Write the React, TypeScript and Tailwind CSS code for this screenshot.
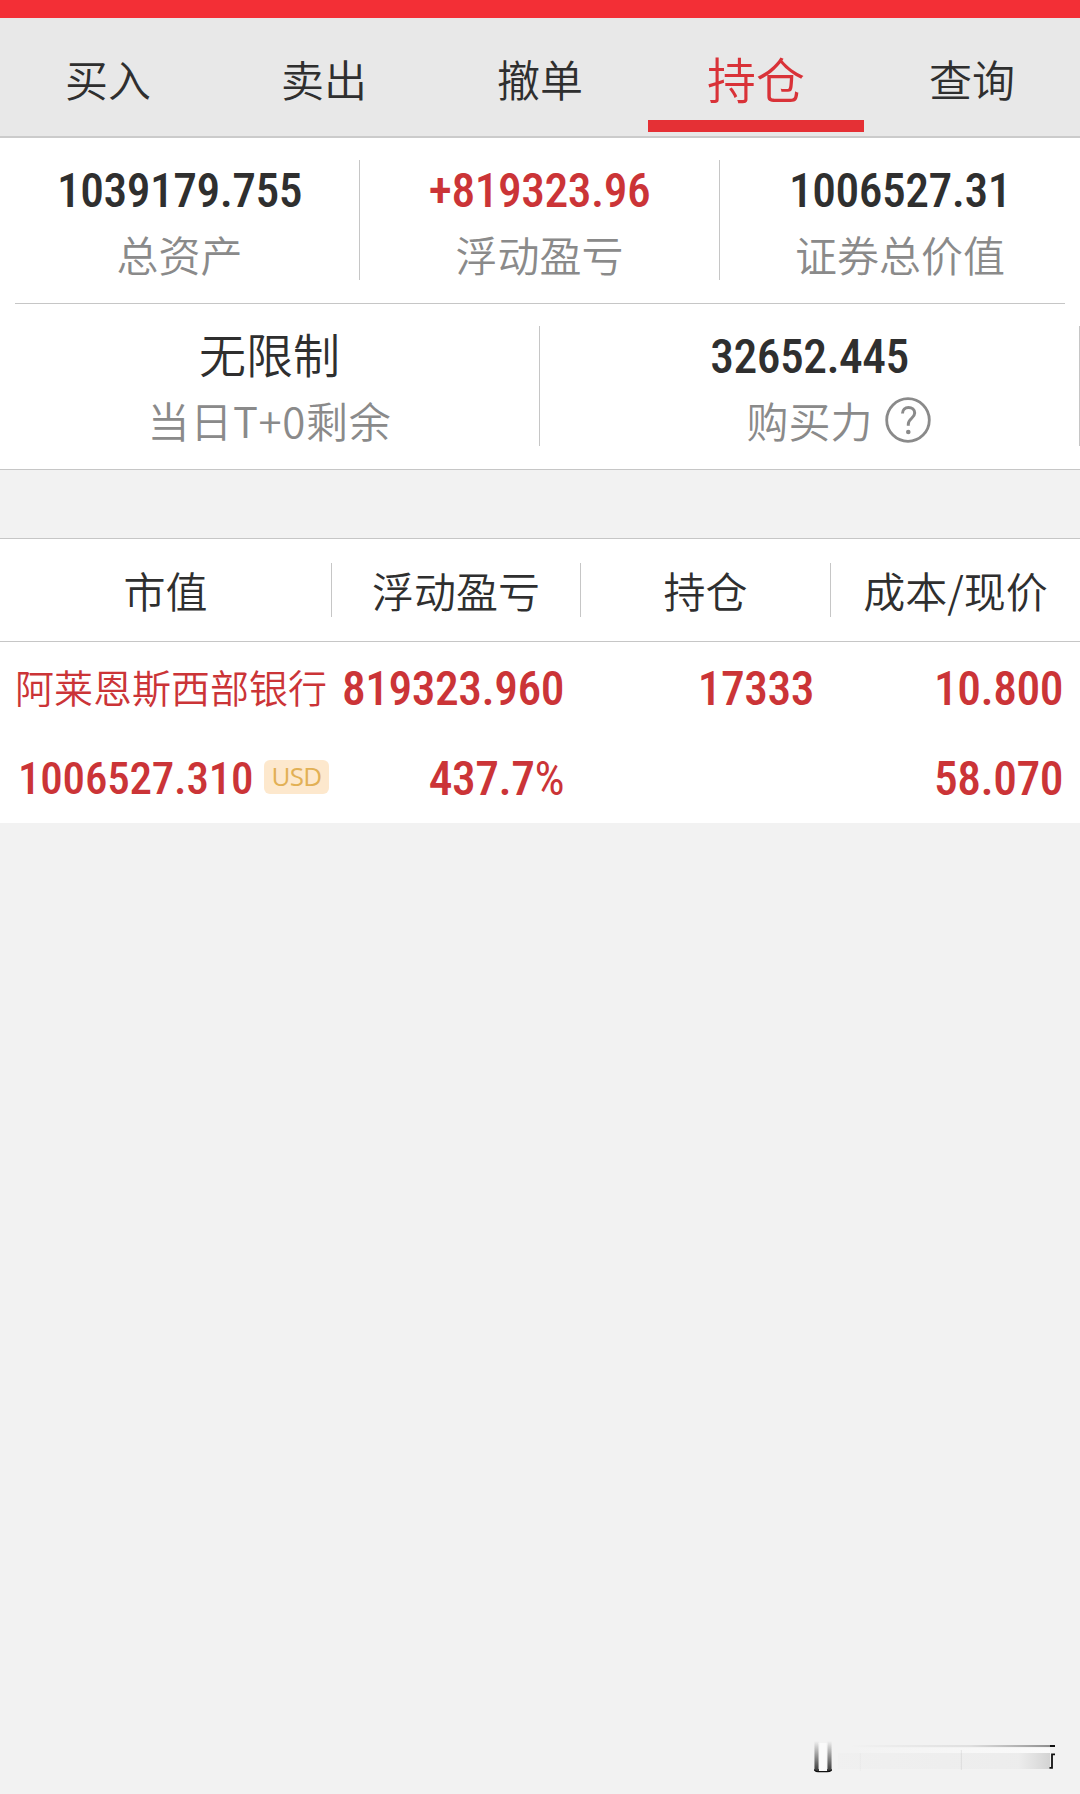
import React from 'react';
import clsx from 'clsx';

interface Stat {
  label: string;
  value: string;
  tone?: 'up';
  cjk?: boolean;
  help?: boolean;
}

const TABS = ['买入', '卖出', '撤单', '持仓', '查询'];
const ACTIVE_TAB = '持仓';

const SUMMARY: Stat[] = [
  { label: '总资产', value: '1039179.755' },
  { label: '浮动盈亏', value: '+819323.96', tone: 'up' },
  { label: '证券总价值', value: '1006527.31' },
];

const LIMITS: Stat[] = [
  { label: '当日T+0剩余', value: '无限制', cjk: true },
  { label: '购买力', value: '32652.445', help: true },
];

const COLUMNS = ['市值', '浮动盈亏', '持仓', '成本/现价'];

const HOLDING = {
  name: '阿莱恩斯西部银行',
  marketValue: '1006527.310',
  currency: 'USD',
  profit: '819323.960',
  profitRate: '437.7',
  quantity: '17333',
  cost: '10.800',
  price: '58.070',
};

const NUM = "font-['Roboto_Condensed','Roboto',sans-serif] font-medium text-[47.5px] tracking-[-0.5px] pt-[3px]";

const HelpIcon = () => (
  <svg width="46" height="46" viewBox="0 0 46 46" fill="none" stroke="#8a8a8a" className="shrink-0">
    <circle cx="23" cy="23" r="21.3" strokeWidth="2.8" />
    <path d="M17.5 16.500c0-4 2.600-6 6-6s6.200 2 6.200 5.600c0 5-6.400 5.400-6.400 11.200v1.400" strokeWidth="3" />
    <circle cx="23.3" cy="35" r="2.3" fill="#8a8a8a" stroke="none" />
  </svg>
);

const TabBar = () => (
  <nav className="flex h-[120px] bg-[#e8e8e8] border-b-2 border-[#cbcbcb]">
    {TABS.map(tab => {
      const active = tab === ACTIVE_TAB;
      return (
        <button key={tab} className="flex-1 flex flex-col pt-[17px] pb-1">
          <span
            className={clsx(
              'flex-1 w-full flex items-center justify-center leading-none',
              active ? 'text-[49px] text-[#d93238]' : 'text-[43px] pt-px'
            )}
          >
            {tab}
          </span>
          <span className={clsx('h-3 w-full', active && 'bg-[#e53035]')} />
        </button>
      );
    })}
  </nav>
);

const StatCell = ({ stat, divider }: { stat: Stat; divider: boolean }) => (
  <div className={clsx('flex flex-col items-center pt-1.5 gap-4', divider && 'border-r border-[#c6c6c6]')}>
    <div
      className={clsx(
        'h-12 flex items-center leading-none',
        stat.cjk ? 'text-[47px] pb-2' : NUM,
        stat.tone === 'up' && 'text-[#cb3437]'
      )}
    >
      {stat.value}
    </div>
    <div
      className={clsx(
        'h-12 flex items-center gap-3 text-[42px] leading-none text-[#8a8a8a]',
        stat.cjk && 'tracking-[0.7px]',
        stat.help && 'pl-[58px]'
      )}
    >
      {stat.label}
      {stat.help && <HelpIcon />}
    </div>
  </div>
);

const HoldingRow = () => (
  <div className="pt-px text-[#cb3437] leading-none">
    <div className="flex h-[90px] items-center">
      <div className="w-[332px] pl-[15px] pb-1 text-[39px] whitespace-nowrap">{HOLDING.name}</div>
      <div className={`w-[249px] pr-[17px] text-right ${NUM}`}>{HOLDING.profit}</div>
      <div className={`w-[250px] pr-[17px] text-right ${NUM}`}>{HOLDING.quantity}</div>
      <div className={`w-[249px] pr-[17px] text-right ${NUM}`}>{HOLDING.cost}</div>
    </div>
    <div className="flex h-[90px] items-center">
      <div className="w-[332px] pl-[18px] flex items-center justify-between pr-[3px]">
        <span className="font-['Roboto_Condensed','Roboto',sans-serif] font-medium text-[45px] tracking-[-0.2px]">
          {HOLDING.marketValue}
        </span>
        <span className="w-[65px] h-[34px] mb-0.5 pb-0.5 flex items-center justify-center rounded-md bg-[#fde8cd] text-[#e2b055] text-[26px] tracking-[-0.7px] font-['Open_Sans',sans-serif] font-normal">
          {HOLDING.currency}
        </span>
      </div>
      <div className={`w-[249px] pr-[17px] text-right ${NUM}`}>
        {HOLDING.profitRate}
        <span className="font-normal">%</span>
      </div>
      <div className="w-[250px]" />
      <div className={`w-[249px] pr-[17px] text-right ${NUM}`}>{HOLDING.price}</div>
    </div>
  </div>
);

// faint smear in the bottom corner
const CornerMark = () => (
  <svg width="270" height="40" viewBox="0 0 270 40">
    <defs>
      <linearGradient id="leg" x1="0" y1="0" x2="0" y2="1">
        <stop offset="0" stopColor="#222" stopOpacity="0" />
        <stop offset="1" stopColor="#222" stopOpacity="0.9" />
      </linearGradient>
      <linearGradient id="legSide" x1="0" y1="0" x2="1" y2="0">
        <stop offset="0" stopColor="#f2f2f2" />
        <stop offset="0.3" stopColor="#f2f2f2" stopOpacity="0" />
        <stop offset="0.7" stopColor="#f2f2f2" stopOpacity="0" />
        <stop offset="1" stopColor="#f2f2f2" />
      </linearGradient>
      <linearGradient id="trail" x1="0" y1="0" x2="1" y2="0">
        <stop offset="0" stopColor="#555" stopOpacity="0" />
        <stop offset="0.6" stopColor="#555" stopOpacity="0.15" />
        <stop offset="1" stopColor="#333" stopOpacity="0.65" />
      </linearGradient>
      <linearGradient id="gap" x1="0" y1="0" x2="1" y2="0">
        <stop offset="0" stopColor="#fafafa" stopOpacity="0" />
        <stop offset="1" stopColor="#fafafa" />
      </linearGradient>
      <linearGradient id="haze" x1="0" y1="0" x2="1" y2="0">
        <stop offset="0" stopColor="#888" stopOpacity="0.02" />
        <stop offset="0.85" stopColor="#888" stopOpacity="0.05" />
        <stop offset="1" stopColor="#777" stopOpacity="0.25" />
      </linearGradient>
    </defs>
    <rect x="28" y="5" width="10" height="28" fill="#fafafa" />
    <rect x="24" y="3" width="5" height="30" fill="url(#leg)" />
    <rect x="23.5" y="3" width="6" height="28" fill="url(#legSide)" />
    <rect x="37" y="3" width="5" height="30" fill="url(#leg)" />
    <rect x="36.5" y="3" width="6" height="28" fill="url(#legSide)" />
    <path d="M25 32.5q1 1.2 3 1.2h9q3 0 4-1.2" stroke="#111" strokeWidth="1.2" fill="none" />
    <rect x="60" y="10" width="200" height="5" fill="url(#gap)" />
    <rect x="60" y="7.2" width="200" height="1.6" fill="url(#trail)" />
    <rect x="48" y="15" width="212" height="16" fill="url(#haze)" />
    <rect x="69.5" y="15" width="1.5" height="18" fill="url(#haze)" />
    <rect x="170" y="12" width="1.5" height="20" fill="url(#haze)" />
    <rect x="260" y="7" width="5" height="2" fill="#111" />
    <path d="M265 16.3h-3v13.5h-2.5" stroke="#111" strokeWidth="1.8" fill="none" />
  </svg>
);

export default function App() {
  return (
    <div className="w-[1080px] h-[1794px] flex flex-col bg-[#f2f2f2] text-[#2f2f2f] font-['Noto_Sans_CJK_SC',sans-serif] [font-weight:350]">
      <div className="h-[18px] bg-[#f32f36]" />
      <TabBar />

      <section className="bg-white border-b border-[#c6c6c6]">
        <div className="grid grid-cols-3 h-[120px] mt-[22px]">
          {SUMMARY.map((stat, i) => (
            <StatCell key={stat.label} stat={stat} divider={i < SUMMARY.length - 1} />
          ))}
        </div>
        <div className="mt-[23px] mx-[15px] h-px bg-[#c6c6c6]" />
        <div className="grid grid-cols-2 h-[120px] mt-[22px] mb-[23px]">
          {LIMITS.map(stat => (
            <StatCell key={stat.label} stat={stat} divider />
          ))}
        </div>
      </section>

      <section className="mt-[68px] bg-white border-t border-[#c6c6c6]">
        <div className="flex h-[103px] items-center border-b border-[#c6c6c6] text-[42px] leading-none">
          {COLUMNS.map((col, i) => (
            <div
              key={col}
              className={clsx(
                'h-[54px] flex items-center justify-center',
                i === 0 ? 'w-[332px]' : i === 2 ? 'w-[250px]' : 'w-[249px]',
                i < COLUMNS.length - 1 && 'border-r border-[#c6c6c6]'
              )}
            >
              {col}
            </div>
          ))}
        </div>
        <HoldingRow />
      </section>

      <div className="flex-1 flex items-end justify-end pr-5 pb-4">
        <CornerMark />
      </div>
    </div>
  );
}
